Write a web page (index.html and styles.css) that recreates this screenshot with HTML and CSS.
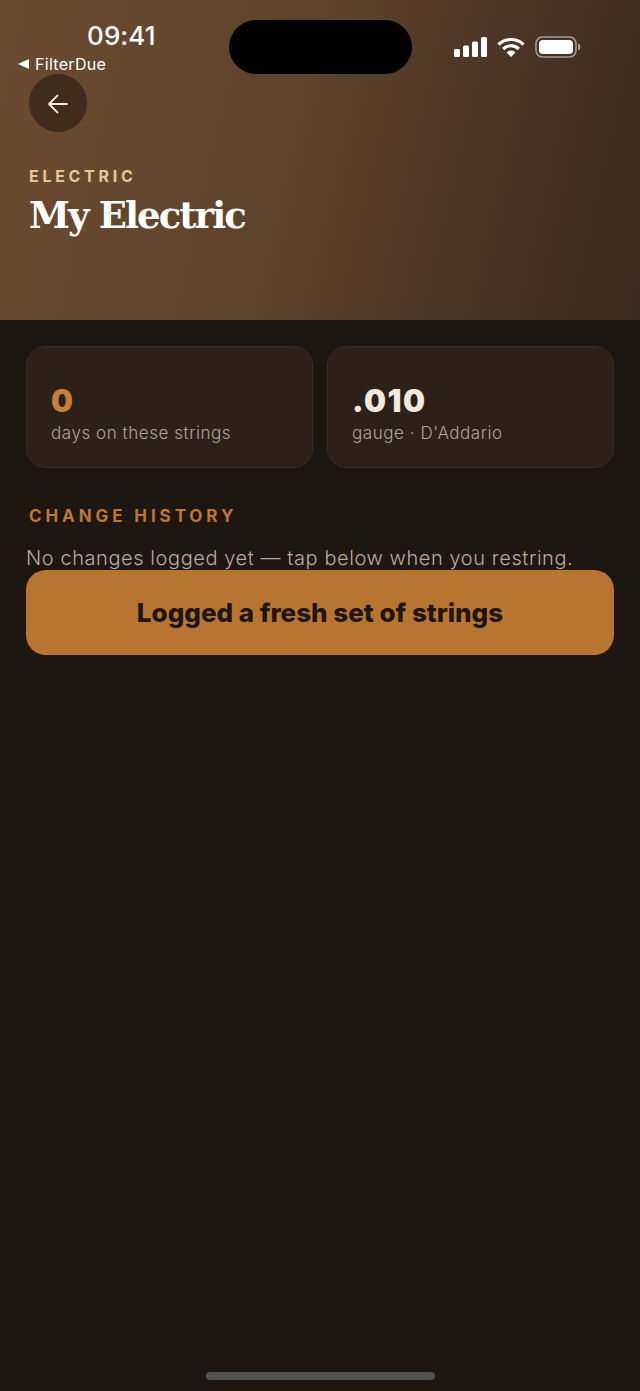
FILE: index.html
```html
<!DOCTYPE html>
<html lang="en">
<head>
  <meta charset="UTF-8" />
  <title>My Electric</title>
  <link rel="stylesheet" href="styles.css">
</head>
<body>

  <div class="status">
    <span class="hora">09:41</span>
    <span class="volver"><i class="tri"></i>FilterDue</span>
    <div class="isla"></div>
    <div class="status-iconos">
      <svg width="33" height="20" viewBox="0 0 33 20" fill="#fff">
        <rect x="0" y="12" width="6" height="8" rx="1.5"/>
        <rect x="9" y="8.5" width="6" height="11.5" rx="1.5"/>
        <rect x="18" y="4.5" width="6" height="15.5" rx="1.5"/>
        <rect x="27" y="0" width="6" height="20" rx="1.5"/>
      </svg>
      <svg width="28" height="20" viewBox="0 0 28 20" fill="none" stroke="#fff" stroke-width="3.2">
        <path d="M1.5 7.5C8.5 .8 19.5 .8 26.5 7.5"/>
        <path d="M6.2 12C10.8 7.6 17.2 7.6 21.8 12"/>
        <path d="M14 20L9.6 15.4C12 13 16 13 18.4 15.4Z" fill="#fff" stroke="none"/>
      </svg>
      <svg width="46" height="22" viewBox="0 0 46 22" fill="none">
        <rect x="1" y="1" width="40" height="20" rx="6.5" stroke="#a89a8e" stroke-width="1.6"/>
        <rect x="4" y="4" width="34" height="14" rx="4" fill="#fff"/>
        <path d="M43 7.5c1.6.4 2.4 1.8 2.4 3.5s-.8 3.1-2.4 3.5z" fill="#a89a8e"/>
      </svg>
    </div>
  </div>

  <header class="cabecera">
    <button class="atras">
      <svg width="24" height="24" viewBox="0 0 24 24" fill="none" stroke="#f3e9dd" stroke-width="1.8" stroke-linecap="round" stroke-linejoin="round">
        <path d="M21 12H3.5"/>
        <path d="M11.5 3.5L3 12l8.5 8.5"/>
      </svg>
    </button>
    <div class="tipo">ELECTRIC</div>
    <h1>My Electric</h1>
  </header>

  <main class="contenido">
    <div class="tarjetas">
      <div class="tarjeta">
        <div class="valor naranja">0</div>
        <div class="etiqueta">days on these strings</div>
      </div>
      <div class="tarjeta">
        <div class="valor">.010</div>
        <div class="etiqueta">gauge · D'Addario</div>
      </div>
    </div>

    <h2>CHANGE HISTORY</h2>
    <p class="vacio">No changes logged yet — tap below when you restring.</p>
    <button class="registrar">Logged a fresh set of strings</button>
  </main>

  <div class="barra-inicio"></div>

</body>
</html>
```

FILE: styles.css
```css
* {
  box-sizing: border-box;
}
body {
  margin: 0;
  height: 1391px;
  position: relative;
  overflow: hidden;
  font-family: "Inter", sans-serif;
  background: #1e1610;
}
.status {
  position: absolute;
  top: 0;
  left: 0;
  width: 640px;
  height: 80px;
  color: white;
}
.hora {
  position: absolute;
  left: 87px;
  top: 21px;
  font-size: 26px;
  line-height: 30px;
  font-weight: 500;
  letter-spacing: 0.1px;
}
.volver {
  position: absolute;
  left: 18px;
  top: 54px;
  font-size: 16px;
  line-height: 20px;
  letter-spacing: 0.3px;
  display: flex;
  align-items: center;
  gap: 6px;
}
.tri {
  width: 0;
  height: 0;
  border-top: 5px solid transparent;
  border-bottom: 5px solid transparent;
  border-right: 11px solid white;
}
.isla {
  position: absolute;
  left: 229px;
  top: 20px;
  width: 183px;
  height: 54px;
  background: black;
  border-radius: 27px;
}
.status-iconos {
  position: absolute;
  left: 454px;
  top: 36px;
  display: flex;
  align-items: center;
  gap: 10px;
}
.cabecera {
  height: 320px;
  padding: 74px 29px 0;
  background: linear-gradient(103deg, #6b4b2f 0%, #5d432b 45%, #4b3526 72%, #3a2b20 100%);
}
.atras {
  width: 58px;
  height: 58px;
  border: none;
  border-radius: 50%;
  background: #3f2c1d;
  display: flex;
  align-items: center;
  justify-content: center;
  padding: 2px 0 0;
}
.tipo {
  margin-top: 34px;
  font-size: 16px;
  line-height: 20px;
  font-weight: 700;
  letter-spacing: 3.7px;
  color: #e6c79c;
}
h1 {
  margin: 6px 0 0;
  font-family: "DejaVu Serif", serif;
  font-size: 37px;
  line-height: 46px;
  font-weight: 700;
  color: white;
  letter-spacing: -1.9px;
}
.contenido {
  padding: 26px 26px 0;
}
.tarjetas {
  display: flex;
  gap: 14px;
}
.tarjeta {
  flex: 1;
  height: 122px;
  padding: 38px 24px 0;
  background: #2c2018;
  border: 1px solid #3b2d22;
  border-radius: 20px;
}
.valor {
  font-size: 31px;
  line-height: 32px;
  font-weight: 900;
  letter-spacing: 1.5px;
  color: #f3e9dd;
}
.naranja {
  color: #c47f3a;
}
.etiqueta {
  margin-top: 4px;
  font-size: 17px;
  line-height: 24px;
  font-weight: 300;
  letter-spacing: 0.55px;
  color: #b0a397;
}
h2 {
  margin: 37px 0 0 3px;
  font-size: 17px;
  line-height: 22px;
  font-weight: 700;
  letter-spacing: 3.9px;
  color: #bb7733;
}
.vacio {
  margin: 19px 0 0;
  font-size: 20px;
  line-height: 24px;
  font-weight: 300;
  letter-spacing: 0.58px;
  color: #b8aba0;
}
.registrar {
  display: block;
  width: 100%;
  height: 85px;
  margin: 0;
  border: none;
  border-radius: 20px;
  background: #b87532;
  color: #1e1610;
  font-family: inherit;
  font-size: 26px;
  font-weight: 800;
}
.barra-inicio {
  position: absolute;
  left: 206px;
  top: 1372px;
  width: 229px;
  height: 8px;
  border-radius: 4px;
  background: #555250;
}
```
